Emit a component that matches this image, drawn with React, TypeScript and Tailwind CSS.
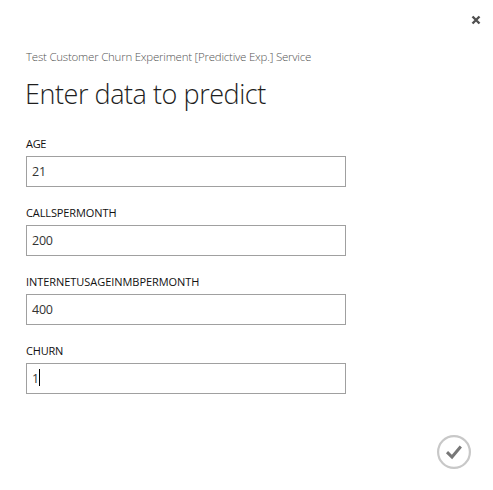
import React from "react";

type FieldProps = { label: string; value: string; tracking: string; focused?: boolean };

function Field({ label, value, tracking, focused }: FieldProps) {
  return (
    <label className="block h-[69px]">
      <span className={`block h-5 w-max text-[11px] leading-4 text-[#111] ${tracking}`}>{label}</span>
      <span className="flex h-[31px] w-[320px] items-center border border-[#a0a0a0] bg-white pl-[5px] pt-px text-[12.5px] tracking-[-0.25px] text-[#333]">
        <span>{value}</span>
        {focused && <span className="mb-[3px] h-[17px] w-px bg-black" />}
      </span>
    </label>
  );
}

export default function App() {
  return (
    <main className="flex h-[490px] w-[493px] flex-col bg-white font-['Open_Sans','Noto_Sans',sans-serif]">
      <header className="flex h-12 justify-end pr-3 pt-[15px]">
        <button aria-label="Close" className="h-[10px] w-[10px]">
          <svg width="10" height="10" viewBox="0 0 10 10" className="block">
            <path d="M1.5 1.5 8.5 8.5M8.5 1.5 1.5 8.5" stroke="#505050" strokeWidth="2.4" />
          </svg>
        </button>
      </header>
      <section className="pl-[26px]">
        <p className="h-[18px] w-max text-[11.5px] font-light leading-[18px] tracking-[-0.23px] text-[#555]">
          Test Customer Churn Experiment [Predictive Exp.] Service
        </p>
        <h1 className="-ml-px mt-2 h-10 w-max text-[27px] font-light leading-10 tracking-[-0.45px] text-[#1e1e1e]">
          Enter data to predict
        </h1>
        <form className="pt-[22px]">
          <Field label="AGE" value="21" tracking="tracking-[-0.3px]" />
          <Field label="CALLSPERMONTH" value="200" tracking="tracking-[-0.11px]" />
          <Field label="INTERNETUSAGEINMBPERMONTH" value="400" tracking="tracking-[-0.05px]" />
          <Field label="CHURN" value="1" tracking="tracking-[-0.2px]" focused />
        </form>
      </section>
      <footer className="flex justify-end pr-[22px] pt-[23px]">
        <button aria-label="Submit">
          <svg width="34" height="34" viewBox="0 0 34 34" fill="none" className="block">
            <circle cx="17" cy="17" r="15.9" stroke="#c8c8c8" strokeWidth="2.2" />
            <path d="M10 17.2 15 22 23.8 11.5" stroke="#777" strokeWidth="3" />
          </svg>
        </button>
      </footer>
    </main>
  );
}
